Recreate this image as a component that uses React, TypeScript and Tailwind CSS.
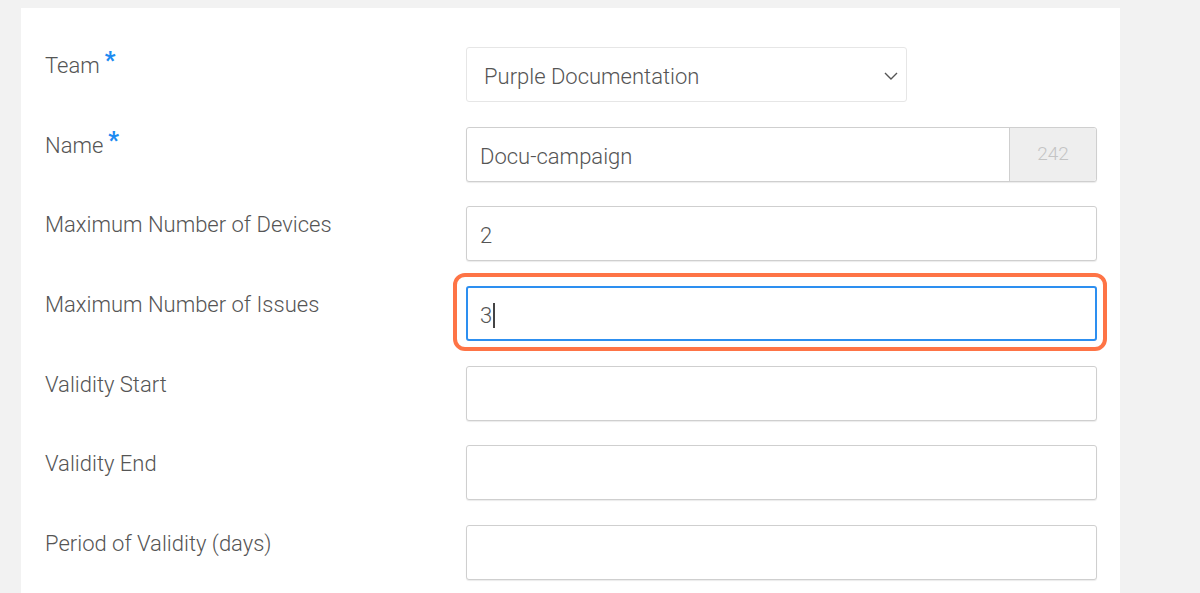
import { ReactNode } from "react";

function Row({ label, required, children }: { label: string; required?: boolean; children: ReactNode }) {
  return (
    <div className="flex h-[55px]">
      <div className="w-[421px] pt-[5px] text-[22px] font-light leading-[28px] text-[#555]">
        {label}
        {required && <span className="relative -top-[5px] ml-[5px] text-[23px] font-black text-[#1d8bf1]">*</span>}
      </div>
      <div className="flex-1">{children}</div>
    </div>
  );
}

function TextBox({ value = "" }: { value?: string }) {
  return (
    <div className="flex h-[55px] w-[631px] items-center rounded-[3px] border border-[#cfcfcf] bg-white px-[13px] pt-[4px] text-[22px] font-light text-[#555] shadow-[0_1px_1px_rgba(0,0,0,0.08)]">
      {value}
    </div>
  );
}

export default function App() {
  return (
    <div className="h-[593px] overflow-hidden bg-[#f2f2f2] font-['Roboto',sans-serif]">
      <div className="ml-[21px] mt-[8px] h-[600px] w-[1099px] bg-white pl-[24px] pt-[39px]">
        <div className="flex flex-col gap-[24.7px]">
          <Row label="Team" required>
            <div className="flex h-[55px] w-[441px] items-center justify-between rounded-[3px] border border-[#e6e6e6] bg-white pl-[17px] pr-[7px] pt-[3px] text-[22px] font-light text-[#555]">
              <span>Purple Documentation</span>
              <svg width="14" height="8" viewBox="0 0 14 8" fill="none" stroke="#555" strokeWidth="1.4" className="mr-[1px]">
                <path d="M1 1l6 6 6-6" />
              </svg>
            </div>
          </Row>

          <Row label="Name" required>
            <div className="flex h-[55px] w-[631px] rounded-[3px] border border-[#cfcfcf] bg-white shadow-[0_1px_1px_rgba(0,0,0,0.08)]">
              <div className="flex flex-1 items-center px-[13px] pt-[4px] text-[22px] font-light text-[#555]">Docu-campaign</div>
              <div className="flex w-[87px] items-center justify-center rounded-r-[3px] border-l border-[#cfcfcf] bg-[#eeeeee] text-[19px] font-light text-[#c4c4c4]">
                242
              </div>
            </div>
          </Row>

          <Row label="Maximum Number of Devices">
            <TextBox value="2" />
          </Row>

          <Row label="Maximum Number of Issues">
            <div className="relative w-[631px]">
              <div className="flex h-[55px] items-center rounded-[3px] border-2 border-[#2d8ff0] bg-white px-[12px] pt-[4px] text-[22px] font-light text-[#555]">
                3<span className="ml-[1px] inline-block h-[25px] w-[1.5px] bg-[#444]" />
              </div>
              <div className="pointer-events-none absolute -top-[13px] -bottom-[10px] -left-[13px] -right-[10px] rounded-[12px] border-4 border-[#fe7446]" />
            </div>
          </Row>

          <Row label="Validity Start">
            <TextBox />
          </Row>

          <Row label="Validity End">
            <TextBox />
          </Row>

          <Row label="Period of Validity (days)">
            <TextBox />
          </Row>
        </div>
      </div>
    </div>
  );
}
